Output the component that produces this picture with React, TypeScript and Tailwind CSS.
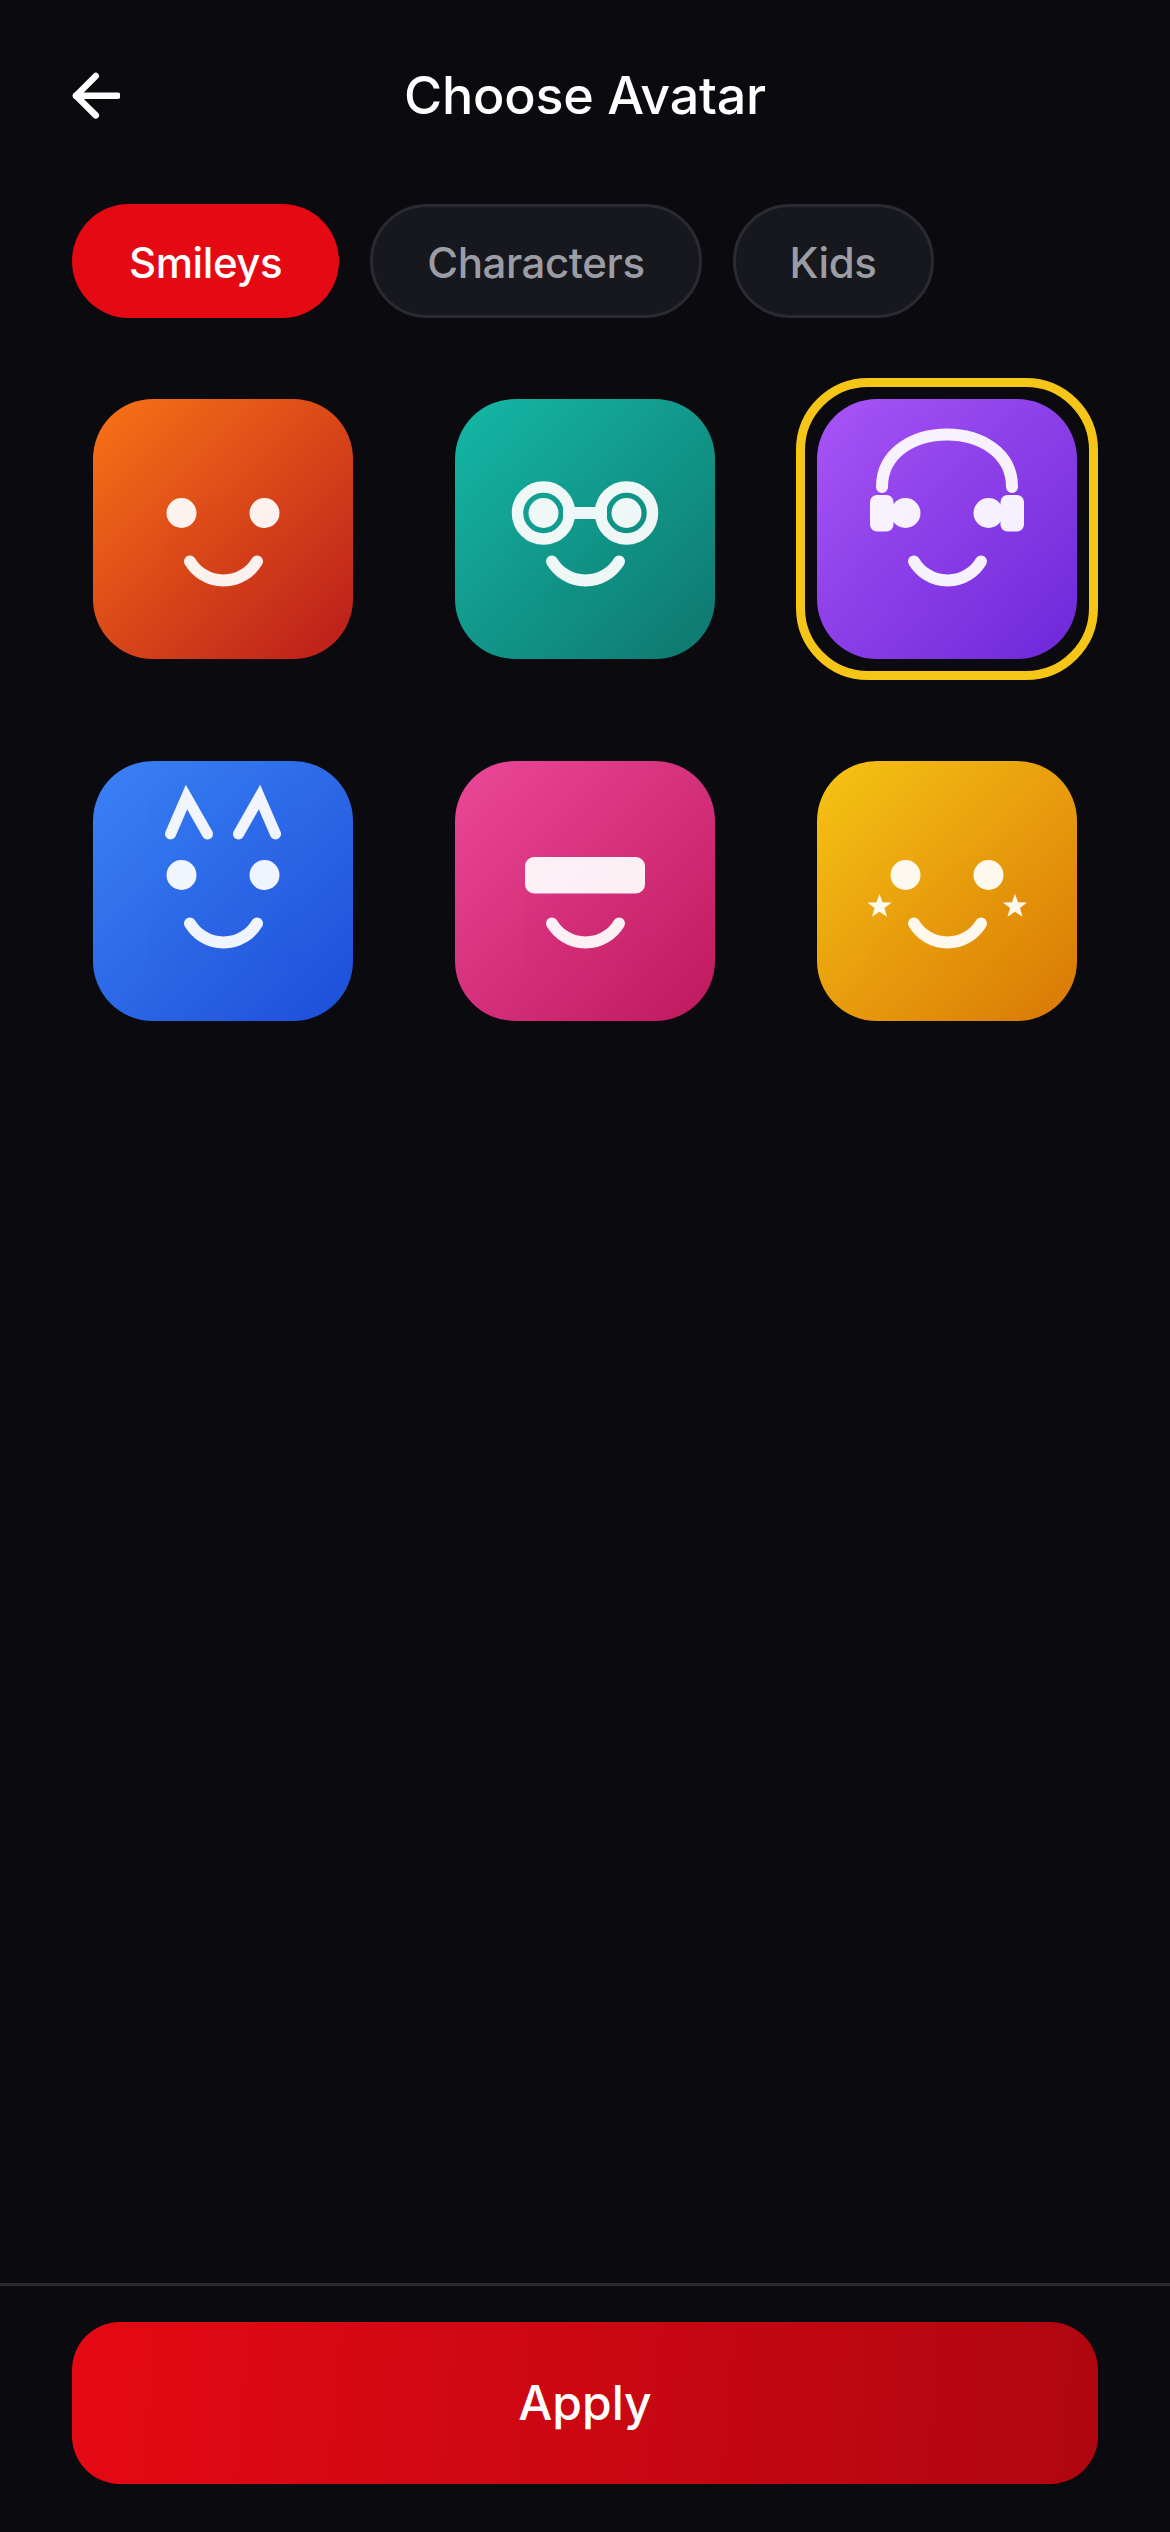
const glyph = "#ffffff";

function Mouth() {
  return <path d="M97 162.5 A39 39 0 0 0 164 162.5" fill="none" stroke={glyph} strokeWidth="12" strokeLinecap="round" />;
}

function Eyes() {
  return (
    <>
      <circle cx="88.5" cy="114" r="15" fill={glyph} />
      <circle cx="171.5" cy="114" r="15" fill={glyph} />
    </>
  );
}

function Plain() {
  return (
    <>
      <Eyes />
      <Mouth />
    </>
  );
}

function Glasses() {
  return (
    <>
      <Eyes />
      <circle cx="88.5" cy="114" r="26" fill="none" stroke={glyph} strokeWidth="11.5" />
      <circle cx="171.5" cy="114" r="26" fill="none" stroke={glyph} strokeWidth="11.5" />
      <rect x="108" y="108" width="44" height="12" rx="3" fill={glyph} />
      <Mouth />
    </>
  );
}

function Headphones() {
  return (
    <>
      <Eyes />
      <path d="M65 88 C65 18 195 18 195 88" fill="none" stroke={glyph} strokeWidth="12" strokeLinecap="round" />
      <rect x="53" y="96" width="23.5" height="36.5" rx="7" fill={glyph} />
      <rect x="183.5" y="96" width="23.5" height="36.5" rx="7" fill={glyph} />
      <Mouth />
    </>
  );
}

function Ears() {
  return (
    <>
      <path d="M77.5 73 L93.5 36 L114.5 73" fill="none" stroke={glyph} strokeWidth="11" strokeLinecap="round" />
      <path d="M145.5 73 L166.5 36 L182.5 73" fill="none" stroke={glyph} strokeWidth="11" strokeLinecap="round" />
      <Plain />
    </>
  );
}

function Visor() {
  return (
    <>
      <rect x="70" y="96" width="120" height="36.5" rx="9" fill={glyph} />
      <Mouth />
    </>
  );
}

function Star({ cx, cy }: { cx: number; cy: number }) {
  const points = Array.from({ length: 10 }, (_, i) => {
    const r = i % 2 === 0 ? 12.8 : 5.2;
    const a = (Math.PI / 5) * i - Math.PI / 2;
    return `${cx + r * Math.cos(a)},${cy + r * Math.sin(a)}`;
  }).join(" ");
  return <polygon points={points} fill={glyph} />;
}

function Stars() {
  return (
    <>
      <Plain />
      <Star cx={62.5} cy={145.5} />
      <Star cx={198} cy={145.5} />
    </>
  );
}

const avatars = [
  { id: "sunny", bg: "bg-[linear-gradient(135deg,#f97316,#b91c1c)]", Face: Plain },
  { id: "nerd", bg: "bg-[linear-gradient(135deg,#14b8a6,#0f766e)]", Face: Glasses },
  { id: "dj", bg: "bg-[linear-gradient(135deg,#a855f7,#6d28d9)]", Face: Headphones, selected: true },
  { id: "cat", bg: "bg-[linear-gradient(135deg,#3b82f6,#1d4ed8)]", Face: Ears },
  { id: "visor", bg: "bg-[linear-gradient(135deg,#ec4899,#be185d)]", Face: Visor },
  { id: "star", bg: "bg-[linear-gradient(135deg,#f6c414,#d97706)]", Face: Stars },
];

export default function App() {
  return (
    <div className="flex h-[2532px] w-full flex-col bg-[#0a0a0f] font-['Inter',sans-serif] text-white">
      <header className="flex items-center justify-between px-[72px] pt-[72px]">
        <button className="h-12 w-12">
          <svg viewBox="0 0 48 48" className="h-12 w-12" fill="none" stroke="white" strokeWidth="6.5" strokeLinecap="round" strokeLinejoin="round">
            <path d="M45.5 23.7H4" />
            <path d="M23.8 4L4 23.7L23.8 43.4" />
          </svg>
        </button>
        <h1 className="text-[52px] leading-12 font-medium tracking-[-0.2px]">Choose Avatar</h1>
        <div className="h-12 w-12" />
      </header>

      <nav className="mt-[84px] flex gap-[31px] px-[72px]">
        <button className="h-[114px] rounded-full bg-[#e50914] px-[57px] pt-[2px] text-[42px] font-medium tracking-[-0.01em]">Smileys</button>
        <button className="h-[114px] rounded-full border-[3px] border-[#2a2a33] bg-[#16181d] px-[54px] pt-[2px] text-[42px] font-medium tracking-[-0.01em] text-[#9c9ca5]">Characters</button>
        <button className="h-[114px] rounded-full border-[3px] border-[#2a2a33] bg-[#16181d] px-[54px] pt-[2px] text-[42px] font-medium tracking-[-0.01em] text-[#9c9ca5]">Kids</button>
      </nav>

      <div className="mt-[60px] grid grid-cols-3 gap-[60px] px-[72px]">
        {avatars.map(({ id, bg, Face, selected }) => (
          <div key={id} className={`rounded-[72px] border-[9px] p-3 ${selected ? "border-[#f5c518]" : "border-transparent"}`}>
            <div className={`h-[260px] w-[260px] overflow-hidden rounded-[60px] ${bg}`}>
              <svg viewBox="0 0 260 260" className="h-[260px] w-[260px] opacity-[0.93]">
                <Face />
              </svg>
            </div>
          </div>
        ))}
      </div>

      <footer className="mt-auto border-t-[3px] border-[#2a2a33] px-[72px] pt-9 pb-12">
        <button className="h-[162px] w-full rounded-[48px] bg-[linear-gradient(95deg,#e50914,#b00610)] text-[48px] font-medium">Apply</button>
      </footer>
    </div>
  );
}
